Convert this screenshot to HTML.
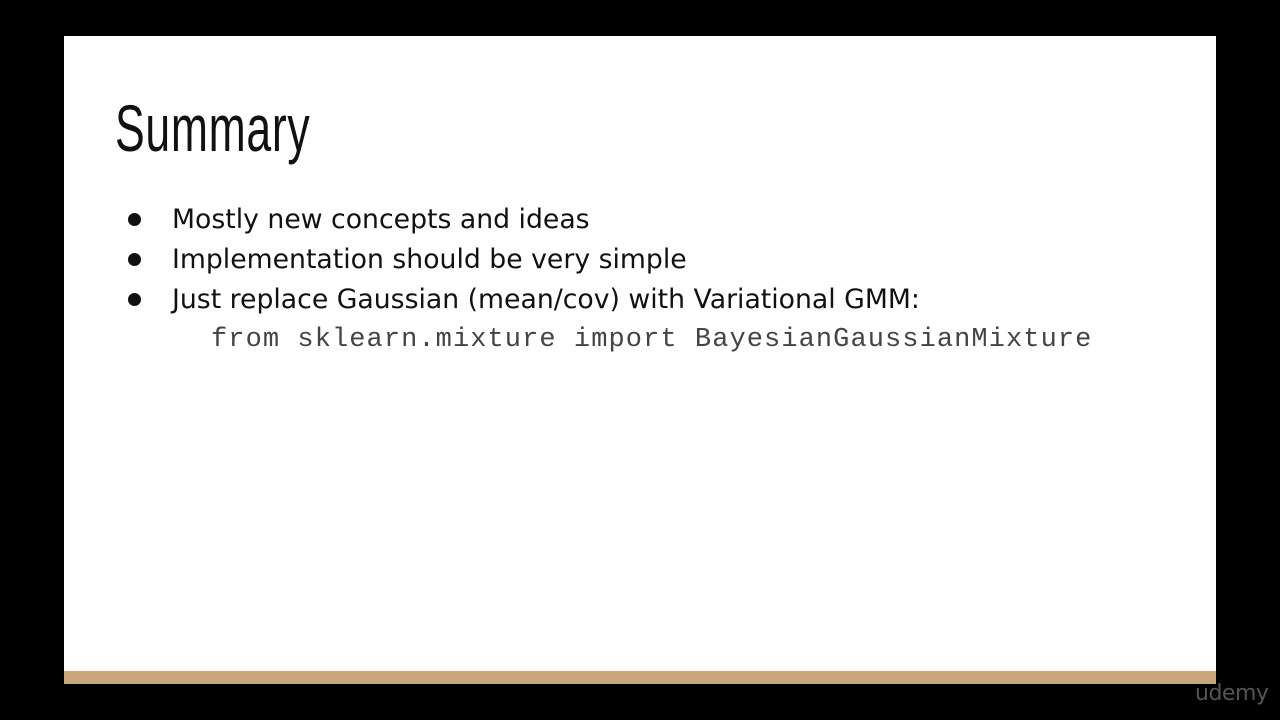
<!DOCTYPE html>
<html><head><meta charset="utf-8"><style>
body{margin:0;width:1280px;height:720px;background:#000;position:relative;overflow:hidden}
.slide{position:absolute;left:64px;top:36px;width:1152px;height:648px;background:#fff}
.bar{position:absolute;left:64px;top:671px;width:1152px;height:13px;background:#c9a57b}
.title{position:absolute;left:115px;top:90px;font-family:"Liberation Sans",sans-serif;font-size:66px;color:#111;transform:scaleX(0.675);transform-origin:left top;white-space:nowrap;letter-spacing:1px}
.b{position:absolute;left:172px;font-family:"DejaVu Sans","Liberation Sans",sans-serif;font-size:26.7px;color:#111;white-space:nowrap}
.dot{position:absolute;left:128px;width:13px;height:13px;border-radius:50%;background:#111}
.code{position:absolute;left:211px;top:325px;font-family:"Liberation Mono",monospace;font-size:27px;letter-spacing:1.08px;color:#444;white-space:nowrap}
.u{position:absolute;left:1195px;top:681px;font-family:"DejaVu Sans",sans-serif;font-size:22px;color:#555;letter-spacing:-0.5px}
</style></head><body>
<div class="slide"></div>
<div class="bar"></div>
<div class="title">Summary</div>
<div class="dot" style="top:213px"></div><div class="b" style="top:204px">Mostly new concepts and ideas</div>
<div class="dot" style="top:253px"></div><div class="b" style="top:244px">Implementation should be very simple</div>
<div class="dot" style="top:293px"></div><div class="b" style="top:284px">Just replace Gaussian (mean/cov) with Variational GMM:</div>
<div class="code">from sklearn.mixture import BayesianGaussianMixture</div>
<div class="u">udemy</div>
</body></html>
